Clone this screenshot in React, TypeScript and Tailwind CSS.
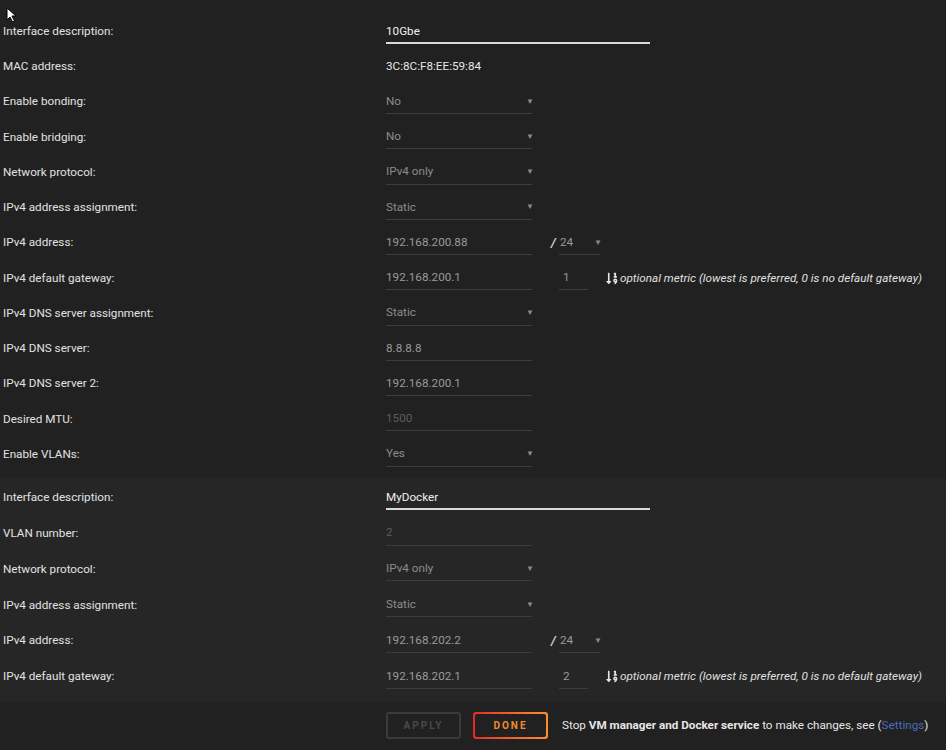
import { FaSortNumericDown } from 'react-icons/fa'

type Field =
  | { kind: 'desc'; value: string }
  | { kind: 'text'; value: string }
  | { kind: 'select'; value: string }
  | { kind: 'input'; value: string; dim?: boolean }
  | { kind: 'cidr'; value: string; mask: string }
  | { kind: 'gateway'; value: string; metric: string }

type Row = { label: string; field: Field }

const MAIN_ROWS: Row[] = [
  { label: 'Interface description:', field: { kind: 'desc', value: '10Gbe' } },
  { label: 'MAC address:', field: { kind: 'text', value: '3C:8C:F8:EE:59:84' } },
  { label: 'Enable bonding:', field: { kind: 'select', value: 'No' } },
  { label: 'Enable bridging:', field: { kind: 'select', value: 'No' } },
  { label: 'Network protocol:', field: { kind: 'select', value: 'IPv4 only' } },
  { label: 'IPv4 address assignment:', field: { kind: 'select', value: 'Static' } },
  { label: 'IPv4 address:', field: { kind: 'cidr', value: '192.168.200.88', mask: '24' } },
  { label: 'IPv4 default gateway:', field: { kind: 'gateway', value: '192.168.200.1', metric: '1' } },
  { label: 'IPv4 DNS server assignment:', field: { kind: 'select', value: 'Static' } },
  { label: 'IPv4 DNS server:', field: { kind: 'input', value: '8.8.8.8' } },
  { label: 'IPv4 DNS server 2:', field: { kind: 'input', value: '192.168.200.1' } },
  { label: 'Desired MTU:', field: { kind: 'input', value: '1500', dim: true } },
  { label: 'Enable VLANs:', field: { kind: 'select', value: 'Yes' } },
]

const VLAN_ROWS: Row[] = [
  { label: 'Interface description:', field: { kind: 'desc', value: 'MyDocker' } },
  { label: 'VLAN number:', field: { kind: 'input', value: '2', dim: true } },
  { label: 'Network protocol:', field: { kind: 'select', value: 'IPv4 only' } },
  { label: 'IPv4 address assignment:', field: { kind: 'select', value: 'Static' } },
  { label: 'IPv4 address:', field: { kind: 'cidr', value: '192.168.202.2', mask: '24' } },
  { label: 'IPv4 default gateway:', field: { kind: 'gateway', value: '192.168.202.1', metric: '2' } },
]

function Arrow() {
  return <span className="ml-auto mr-[-2px] text-[8px] leading-none text-[#8a8a8a]">▼</span>
}

function FieldView({ field }: { field: Field }) {
  switch (field.kind) {
    case 'desc':
      return (
        <div className="flex items-center h-[24px] w-[264px] border-b-2 border-[#d8d8d8] text-[#f0f0f0] pt-[2px]">
          {field.value}
        </div>
      )
    case 'text':
      return <div className="flex items-center h-[24px] text-[#e6e6e6]">{field.value}</div>
    case 'select':
      return (
        <div className="flex items-center h-[24px] w-[146px] border-b border-[#3c3c3c] text-[#8c8c8c]">
          {field.value}
          <Arrow />
        </div>
      )
    case 'input':
      return (
        <div
          className={`flex items-center h-[24px] w-[146px] border-b border-[#3c3c3c] ${
            field.dim ? 'text-[#5c5c5c]' : 'text-[#9a9a9a]'
          }`}
        >
          {field.value}
        </div>
      )
    case 'cidr':
      return (
        <div className="flex items-center">
          <div className="flex items-center h-[24px] w-[146px] border-b border-[#3c3c3c] text-[#9a9a9a]">
            {field.value}
          </div>
          <span className="ml-[19px] w-[8px] font-bold italic text-[#d0d0d0] text-[13px]">/</span>
          <div className="flex items-center h-[24px] w-[41px] border-b border-[#3c3c3c] text-[#9a9a9a] pl-[1px]">
            {field.mask}
            <Arrow />
          </div>
        </div>
      )
    case 'gateway':
      return (
        <div className="flex items-center">
          <div className="flex items-center h-[24px] w-[146px] border-b border-[#3c3c3c] text-[#9a9a9a]">
            {field.value}
          </div>
          <div className="ml-[27px] flex items-center h-[24px] w-[29px] border-b border-[#3c3c3c] text-[#9a9a9a] pl-[4px]">
            {field.metric}
          </div>
          <FaSortNumericDown className="ml-[18px] text-[#e6e6e6] w-[12px] h-[13px]" />
          <span className="ml-[2px] italic text-[#e0e0e0] whitespace-nowrap">
            optional metric (lowest is preferred, 0 is no default gateway)
          </span>
        </div>
      )
  }
}

function FormRow({ row, h }: { row: Row; h: string }) {
  return (
    <div className={`flex items-center ${h}`}>
      <div className="w-[386px] pl-[3px] text-[#e2e2e2]">{row.label}</div>
      <FieldView field={row.field} />
    </div>
  )
}

function Cursor() {
  return (
    <svg className="absolute left-[6px] top-[7px]" width="12" height="16" viewBox="0 0 12 16">
      <path d="M1 1 L1 13 L4 10 L6.5 15 L8.5 14 L6 9 L10 9 Z" fill="#fff" stroke="#000" strokeWidth="1" />
    </svg>
  )
}

export default function App() {
  return (
    <div
      className="relative w-[946px] h-[750px] overflow-hidden bg-[#212121] text-[11.7px]"
      style={{ fontFamily: 'Roboto, "Noto Sans", sans-serif' }}
    >
      <Cursor />
      <section className="pt-[14px] h-[478px]">
        {MAIN_ROWS.map((r, i) => (
          <FormRow key={i} row={r} h="h-[35.25px]" />
        ))}
      </section>
      <section className="bg-[#262626] pt-[2px] h-[224px]">
        {VLAN_ROWS.map((r, i) => (
          <FormRow key={i} row={r} h="h-[35.8px]" />
        ))}
      </section>
      <footer className="flex items-center h-[47px] pl-[386px] whitespace-nowrap">
        <button className="w-[75px] h-[27px] rounded-[3px] border-2 border-[#3a3a3a] text-[10px] font-bold tracking-[2px] text-[#4a4a4a]">
          APPLY
        </button>
        <button className="ml-[12px] w-[75px] h-[27px] rounded-[3px] p-[2px] bg-gradient-to-r from-[#e22828] to-[#ff8c2f]">
          <span className="flex items-center justify-center w-full h-full rounded-[2px] bg-[#212121] text-[10px] font-bold tracking-[2px] text-[#f08a30]">
            DONE
          </span>
        </button>
        <p className="ml-[14px] text-[#e6e6e6]">
          Stop <b>VM manager and Docker service</b> to make changes, see (
          <a className="text-[#486dba]">Settings</a>)
        </p>
      </footer>
    </div>
  )
}
